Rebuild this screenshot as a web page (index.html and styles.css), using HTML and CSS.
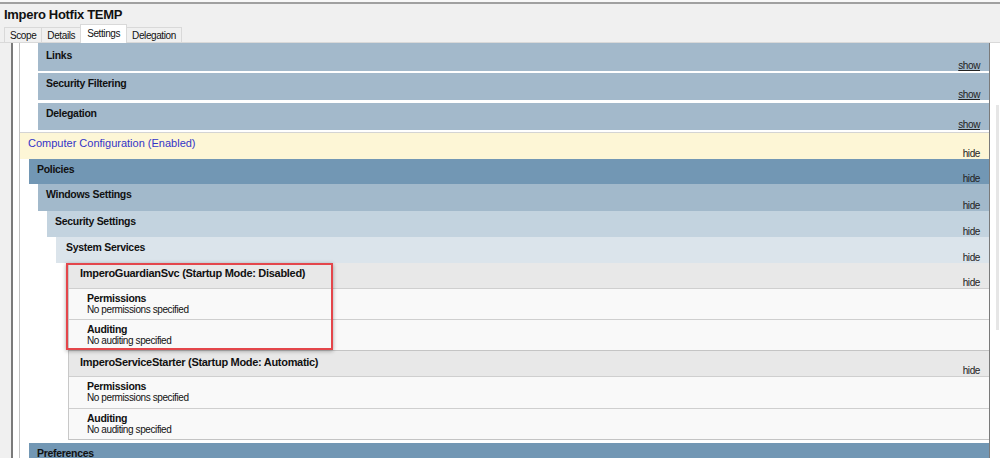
FILE: index.html
```html
<!DOCTYPE html>
<html lang="en">
<head>
    <meta charset="UTF-8">
    <meta name="viewport" content="width=device-width, initial-scale=1.0">
    <title>Impero Hotfix TEMP</title>
    <link rel="stylesheet" href="styles.css">
</head>
<body>
    <div class="topline"></div>
    <h1 class="title">Impero Hotfix TEMP</h1>
    <div class="tabs">
        <span class="tab">Scope</span>
        <span class="tab">Details</span>
        <span class="tab active">Settings</span>
        <span class="tab">Delegation</span>
    </div>

    <div class="panel">
        <div class="frame">
            <div class="tree">
                <!-- GPO summary, collapsed -->
                <div class="summary">
                    <div class="band info links"><span class="label">Links</span><a class="toggle show" href="#">show</a></div>
                    <div class="band info filtering"><span class="label">Security Filtering</span><a class="toggle show" href="#">show</a></div>
                    <div class="band info delegation"><span class="label">Delegation</span><a class="toggle show" href="#">show</a></div>
                </div>

                <div class="band config"><span class="label">Computer Configuration (Enabled)</span><a class="toggle" href="#">hide</a></div>
                <div class="section">
                    <div class="band policies"><span class="label">Policies</span><a class="toggle" href="#">hide</a></div>
                    <div class="section">
                        <div class="band windows"><span class="label">Windows Settings</span><a class="toggle" href="#">hide</a></div>
                        <div class="section">
                            <div class="band security"><span class="label">Security Settings</span><a class="toggle" href="#">hide</a></div>
                            <div class="section">
                                <div class="band system"><span class="label">System Services</span><a class="toggle" href="#">hide</a></div>

                                <div class="service flagged">
                                    <div class="band svc-head"><span class="label">ImperoGuardianSvc (Startup Mode: Disabled)</span><a class="toggle" href="#">hide</a></div>
                                    <div class="row">
                                        <div class="row-title">Permissions</div>
                                        <div class="row-text">No permissions specified</div>
                                    </div>
                                    <div class="row">
                                        <div class="row-title">Auditing</div>
                                        <div class="row-text">No auditing specified</div>
                                    </div>
                                    <div class="flag"></div>
                                </div>

                                <div class="service">
                                    <div class="band svc-head starter"><span class="label">ImperoServiceStarter (Startup Mode: Automatic)</span><a class="toggle" href="#">hide</a></div>
                                    <div class="row tall">
                                        <div class="row-title">Permissions</div>
                                        <div class="row-text">No permissions specified</div>
                                    </div>
                                    <div class="row">
                                        <div class="row-title">Auditing</div>
                                        <div class="row-text">No auditing specified</div>
                                    </div>
                                </div>
                            </div>
                        </div>
                    </div>
                </div>
                <div class="section">
                    <div class="band policies preferences"><span class="label">Preferences</span></div>
                </div>
            </div>
        </div>
        <div class="scrollbar"><div class="thumb"></div></div>
    </div>
</body>
</html>
```

FILE: styles.css
```css
/* Window */
body {
    margin: 0;
    height: 458px;
    overflow: hidden;
    background-color: #f0f0f0;
    font-family: 'Liberation Sans', Arial, sans-serif;
    color: #111;
}

.topline {
    height: 2px;
    background: #f8f8f8;
    border-bottom: 2px solid #a0a0a0;
}

.title {
    margin: 3px 0 0 4px;
    font-size: 13px;
    line-height: 16px;
    font-weight: bold;
    letter-spacing: -0.3px;
}

/* Tabs */
.tabs {
    display: flex;
    align-items: flex-end;
    height: 19px;
    padding-left: 4px;
}

.tab {
    height: 15px;
    box-sizing: border-box;
    padding: 0 5px;
    border: 1px solid #d9d9d9;
    border-bottom: none;
    border-left: none;
    background: #f0f0f0;
    font-size: 10px;
    line-height: 15px;
    letter-spacing: -0.4px;
}

.tab:first-child {
    border-left: 1px solid #d9d9d9;
}

.tab.active {
    position: relative;
    height: 19px;
    margin: 0 0 -1px -1px;
    padding: 1px 6px 0;
    border-left: 1px solid #d9d9d9;
    background: #fff;
}

/* Report panel */
.panel {
    display: flex;
    height: 415px;
    border-top: 1px solid #d9d9d9;
}

.frame {
    flex: 1;
    margin-left: 11px;
    background: #fff;
    border-left: 2px solid #7a7a7a;
    border-right: 1px solid #7a7a7a;
    overflow: hidden;
}

.scrollbar {
    width: 10px;
    background: #fff;
}

.thumb {
    width: 3px;
    height: 225px;
    margin: 62px 0 0 6px;
    background: #e6e6e6;
}

.tree {
    height: 100%;
    margin-left: 6px;
    border-left: 1px solid #c4c4c4;
}

.section {
    margin-left: 9px;
}

/* Heading bands */
.band {
    display: flex;
    justify-content: space-between;
    box-sizing: border-box;
    padding: 3px 9px 0 8px;
}

.label {
    font-size: 10.5px;
    font-weight: bold;
    line-height: 14px;
    letter-spacing: -0.3px;
    white-space: nowrap;
}

.toggle {
    align-self: flex-end;
    font-size: 10px;
    line-height: 10px;
    letter-spacing: -0.4px;
    color: #222;
    text-decoration: none;
}

.toggle.show {
    text-decoration: underline;
}

.summary {
    margin-left: 18px;
}

.info {
    background: #a3b9cb;
    height: 27px;
}

.links {
    height: 28px;
    padding-top: 5px;
    margin-bottom: 2px;
}

.filtering {
    margin-bottom: 3px;
}

.delegation {
    margin-bottom: 2px;
}

.config {
    height: 27px;
    background: #fdf6d6;
    border-top: 1px solid #d4d4d4;
}

.config .label {
    font-size: 11px;
    font-weight: normal;
    letter-spacing: 0;
    color: #3434c8;
}

.policies {
    height: 25px;
    background: #7297b4;
}

.preferences {
    margin-top: 3px;
}

.windows {
    height: 27px;
    background: #a2b9cb;
}

.security {
    height: 26px;
    background: #c3d3df;
}

.system {
    height: 26px;
    padding-left: 10px;
    background: #dbe4eb;
}

/* Service entries */
.service {
    margin-left: 12px;
    border-left: 1px solid #c8c8c8;
    border-bottom: 1px solid #c4c4c4;
}

.flagged {
    position: relative;
}

.svc-head {
    height: 25px;
    padding-left: 11px;
    background: #e8e8e8;
}

.svc-head .label {
    font-size: 11px;
}

.starter {
    padding-top: 4px;
}

.row {
    height: 31px;
    box-sizing: border-box;
    padding: 3px 0 0 18px;
    border-top: 1px solid #cfcfcf;
    background: #f9f9f9;
}

.row.tall {
    height: 32px;
}

.row-title {
    font-size: 10.5px;
    font-weight: bold;
    line-height: 12px;
    letter-spacing: -0.3px;
}

.row-text {
    font-size: 10px;
    line-height: 12px;
    letter-spacing: -0.4px;
}

/* Red highlight drawn over the first service */
.flag {
    position: absolute;
    left: -3px;
    top: 0;
    width: 267px;
    height: 87px;
    box-sizing: border-box;
    border: 2px solid #e4464b;
    box-shadow: 0 1px 4px rgba(0, 0, 0, 0.35);
}
```
